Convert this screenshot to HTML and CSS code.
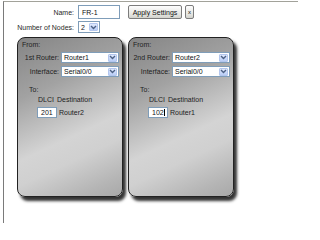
FILE: index.html
```html
<!DOCTYPE html>
<html>
<head>
<meta charset="utf-8">
<link rel="stylesheet" href="styles.css">
</head>
<body>
<div class="frame">
  <div class="row r1">
    <span class="lbl">Name:</span>
    <span class="txt name">FR-1</span>
    <span class="btn apply">Apply Settings</span>
    <span class="btn xbtn">x</span>
  </div>
  <div class="row r2">
    <span class="lbl">Number of Nodes:</span>
    <span class="sel nodes"><span class="v">2</span><span class="arr"><svg width="7" height="5" viewBox="0 0 7 5"><path d="M1 1 L3.5 3.5 L6 1" fill="none" stroke="#4d6185" stroke-width="1.4"/></svg></span></span>
  </div>
  <div class="panels">
    <div class="panel">
      <div class="h">From:</div>
      <div class="prow first">
        <span class="plbl">1st Router:</span>
        <span class="sel wide"><span class="v">Router1</span><span class="arr"><svg width="7" height="5" viewBox="0 0 7 5"><path d="M1 1 L3.5 3.5 L6 1" fill="none" stroke="#4d6185" stroke-width="1.4"/></svg></span></span>
      </div>
      <div class="prow">
        <span class="plbl">Interface:</span>
        <span class="sel wide"><span class="v">Serial0/0</span><span class="arr"><svg width="7" height="5" viewBox="0 0 7 5"><path d="M1 1 L3.5 3.5 L6 1" fill="none" stroke="#4d6185" stroke-width="1.4"/></svg></span></span>
      </div>
      <div class="to">To:</div>
      <div class="cols"><span class="dlci">DLCI</span><span>Destination</span></div>
      <div class="vals"><span class="txt dl">201</span><span>Router2</span></div>
    </div>
    <div class="panel">
      <div class="h">From:</div>
      <div class="prow first">
        <span class="plbl">2nd Router:</span>
        <span class="sel wide"><span class="v">Router2</span><span class="arr"><svg width="7" height="5" viewBox="0 0 7 5"><path d="M1 1 L3.5 3.5 L6 1" fill="none" stroke="#4d6185" stroke-width="1.4"/></svg></span></span>
      </div>
      <div class="prow">
        <span class="plbl">Interface:</span>
        <span class="sel wide"><span class="v">Serial0/0</span><span class="arr"><svg width="7" height="5" viewBox="0 0 7 5"><path d="M1 1 L3.5 3.5 L6 1" fill="none" stroke="#4d6185" stroke-width="1.4"/></svg></span></span>
      </div>
      <div class="to">To:</div>
      <div class="cols"><span class="dlci">DLCI</span><span>Destination</span></div>
      <div class="vals"><span class="txt dl">10<span class="caret">2</span></span><span>Router1</span></div>
    </div>
  </div>
</div>
</body>
</html>
```
FILE: styles.css
```css
html, body {
  margin: 0;
  padding: 0;
  background: #fff;
}
body {
  font-family: "Liberation Sans", Arial, sans-serif;
  font-size: 7px;
  color: #1a1a1a;
  width: 298px;
  height: 224px;
  overflow: hidden;
}
.frame {
  margin: 1px 0 0 3px;
  border-top: 1px solid #a2a29a;
  border-left: 1px solid #7a7a7a;
  height: 222px;
  padding-top: 3px;
  box-sizing: border-box;
}
.row {
  display: flex;
  align-items: center;
}
.r1 { height: 14px; }
.r2 { height: 12px; margin-top: 2px; }
.lbl {
  width: 70px;
  margin-right: 4px;
  text-align: right;
  color: #2a2a2a;
}
.txt {
  box-sizing: border-box;
  background: #fff;
  border: 1px solid #7f9db9;
  display: flex;
  align-items: center;
  padding-left: 3px;
  color: #111;
}
.name { width: 42px; height: 14px; }
.btn {
  box-sizing: border-box;
  height: 14px;
  border: 1px solid #7c7c7c;
  border-radius: 2px;
  background: linear-gradient(#fdfdfd, #e4e4e0 70%, #d2d2cc);
  display: flex;
  align-items: center;
  justify-content: center;
  color: #111;
}
.apply { width: 54px; margin-left: 8px; }
.xbtn { width: 9px; margin-left: 3px; font-size: 6px; }
.sel {
  box-sizing: border-box;
  background: #fff;
  border: 1px solid #7f9db9;
  display: flex;
  align-items: center;
  justify-content: space-between;
  padding: 0 1px 0 2px;
  color: #111;
}
.sel .arr {
  width: 9px;
  height: 8px;
  background: linear-gradient(#dfe9fd, #b9cdf6);
  border: 1px solid #b3c6ee;
  border-radius: 1px;
  box-sizing: border-box;
  display: flex;
  align-items: center;
  justify-content: center;
}
.nodes { width: 22px; height: 12px; }
.wide { width: 58px; height: 11px; }
.panels {
  display: flex;
  gap: 5px;
  margin: 4px 0 0 13px;
}
.panel {
  box-sizing: border-box;
  width: 106px;
  height: 160px;
  border: 1px solid #222;
  border-radius: 8px;
  box-shadow: 3px 4px 3px rgba(0,0,0,0.8);
  background: linear-gradient(155deg, #858585 0%, #a2a2a2 30%, #d4d4d4 60%, #d0d0d0 72%, #b5b5b5 90%, #a8a8a8 100%);
  padding: 2px 0 0 4px;
  color: #222;
}
.h { line-height: 10px; }
.prow {
  display: flex;
  align-items: center;
  height: 11px;
  margin-top: 3px;
}
.prow.first { margin-top: 2px; }
.plbl {
  width: 37px;
  margin-right: 2px;
  text-align: right;
}
.to {
  line-height: 10px;
  margin: 8px 0 0 7px;
}
.cols {
  line-height: 10px;
  margin-left: 16px;
  display: flex;
}
.dlci { width: 19px; }
.vals {
  display: flex;
  align-items: center;
  margin: 2px 0 0 15px;
  gap: 2px;
}
.dl { width: 20px; height: 11px; }
.caret { border-right: 1px solid #000; }
```
